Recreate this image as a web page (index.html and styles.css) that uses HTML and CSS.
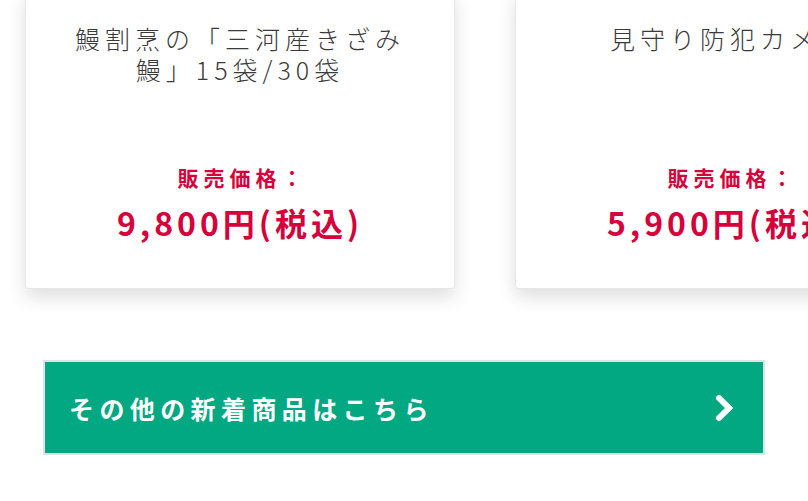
FILE: index.html
```html
<!DOCTYPE html>
<html lang="ja">
<head>
    <meta charset="UTF-8">
    <meta name="viewport" content="width=device-width, initial-scale=1.0">
    <title>新着商品</title>
    <link rel="stylesheet" href="styles.css">
</head>
<body>
    <div class="slider">
        <div class="slider-track">
            <div class="item-card">
                <p class="item-name">鰻割烹の「三河産きざみ鰻」15袋/30袋</p>
                <p class="price-label">販売価格：</p>
                <p class="price">9,800円(税込)</p>
            </div>
            <div class="item-card">
                <p class="item-name">見守り防犯カメラ</p>
                <p class="price-label">販売価格：</p>
                <p class="price">5,900円(税込)</p>
            </div>
        </div>
    </div>

    <a class="more-button" href="#">
        <span class="more-text">その他の新着商品はこちら</span>
        <svg class="more-arrow" width="22" height="30" viewBox="0 0 22 30">
            <polyline points="5,5 15,15 5,25" fill="none" stroke="#fff" stroke-width="6" stroke-linecap="round" stroke-linejoin="miter"/>
        </svg>
    </a>
</body>
</html>
```

FILE: styles.css
```css
/* 新着商品 */
body {
    font-family: "Noto Sans CJK JP", "Noto Sans", sans-serif;
    background-color: #fff;
    margin: 0;
    padding: 0;
    overflow: hidden;
}

.slider {
    overflow: hidden;
    margin-top: -10px;
    padding-bottom: 25px; /* shadow is cut at the bottom */
}

.slider-track {
    display: flex;
    gap: 60px;
    padding-left: 25px;
}

.item-card {
    flex: 0 0 430px;
    box-sizing: border-box;
    background-color: #fff;
    border: 1px solid #e6e6e6;
    border-radius: 4px;
    box-shadow: 0 8px 18px rgba(0, 0, 0, 0.13);
    padding: 32px 40px 44px;
    text-align: center;
}

.item-card p {
    margin: 0;
}

.item-name {
    min-height: 139px;
    font-size: 25px;
    font-weight: 300;
    line-height: 31px;
    letter-spacing: 5px;
    color: #3a3a3a;
    white-space: nowrap;
}

.item-card:first-child .item-name {
    white-space: normal;
}

.price-label {
    font-size: 21px;
    font-weight: bold;
    line-height: 30px;
    letter-spacing: 5px;
    color: #d6003b;
    padding-left: 5px;
}

.price {
    margin-top: 8px !important;
    font-size: 32px;
    font-weight: bold;
    line-height: 44px;
    letter-spacing: 4px;
    color: #d6003b;
    white-space: nowrap;
}

.more-button {
    display: flex;
    justify-content: space-between;
    align-items: center;
    box-sizing: border-box;
    width: 722px;
    height: 95px;
    margin: 46px 0 0 43px;
    padding: 0 27px 0 24px;
    background-color: #02a882;
    border: 2px solid #dde2e2;
    color: #fff;
    text-decoration: none;
}

.more-text {
    font-size: 25px;
    font-weight: bold;
    letter-spacing: 5.4px;
}

.more-arrow {
    display: block;
}
```
